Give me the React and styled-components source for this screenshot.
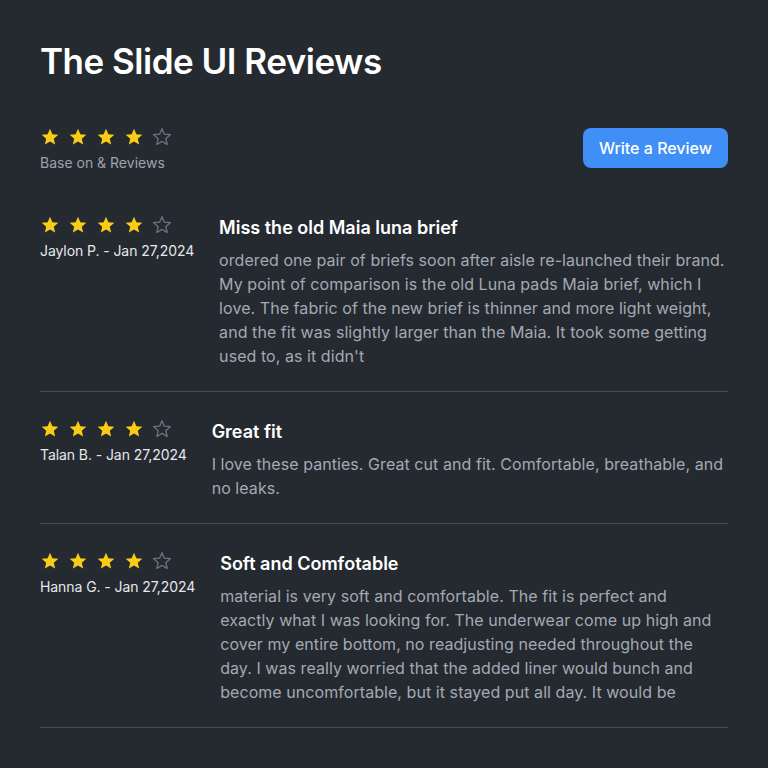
import styled, { createGlobalStyle } from "styled-components";

const GlobalStyle = createGlobalStyle`
  * {
    box-sizing: border-box;
  }
  body {
    margin: 0;
    background: #252a31;
    font-family: Inter, "Noto Sans", sans-serif;
  }
`;

const Page = styled.div`
  min-height: 768px;
  padding: 41px 40px 40px;
  background: #252a31;
`;

const Title = styled.h1`
  margin: 0 0 44px;
  font-size: 35px;
  line-height: 40px;
  font-weight: 600;
  color: #ffffff;
  letter-spacing: -0.5px;
`;

const Header = styled.div`
  display: flex;
  justify-content: space-between;
  align-items: flex-start;
  margin-bottom: 15px;
`;

const Summary = styled.div`
  display: flex;
  flex-direction: column;
  gap: 6px;
  padding-top: 2px;
`;

const SummaryText = styled.span`
  font-size: 14px;
  line-height: 20px;
  color: #9ca3af;
`;

const Button = styled.button`
  height: 40px;
  margin-top: 3px;
  padding: 0 16px;
  border: none;
  border-radius: 8px;
  background: #3f8ff7;
  color: #ffffff;
  font-family: inherit;
  font-size: 16px;
  font-weight: 500;
  cursor: pointer;
`;

const StarRow = styled.div`
  display: flex;
  gap: 8px;
`;

const Review = styled.div`
  display: flex;
  align-items: flex-start;
  gap: 25px;
  padding: 26px 0 23px;
  border-bottom: 1px solid #464c55;
`;

const Meta = styled.div`
  display: flex;
  flex-direction: column;
  gap: 6px;
  flex-shrink: 0;
  padding-top: 1px;
`;

const Author = styled.span`
  font-size: 14px;
  line-height: 20px;
  color: #e5e7eb;
  letter-spacing: -0.08px;
`;

const Body = styled.div`
  flex: 1;
  padding-right: 3px;
`;

const ReviewTitle = styled.h3`
  margin: 0 0 6px;
  font-size: 18px;
  line-height: 28px;
  font-weight: 600;
  color: #ffffff;
`;

const ReviewText = styled.p`
  margin: 0;
  font-size: 16px;
  line-height: 24px;
  color: #a3a9b2;
  letter-spacing: 0.06px;
`;

const STAR = "M12 17.27L18.18 21l-1.64-7.03L22 9.24l-7.19-.61L12 2 9.19 8.63 2 9.24l5.46 4.73L5.82 21z";

const Star = ({ filled }) => (
  <svg width="20" height="20" viewBox="0 0 24 24">
    {filled ? (
      <path d={STAR} fill="#facc15" />
    ) : (
      <path d={STAR} fill="none" stroke="#6b7280" strokeWidth="1.6" strokeLinejoin="round" />
    )}
  </svg>
);

const Stars = ({ value }) => (
  <StarRow>
    {[1, 2, 3, 4, 5].map((i) => (
      <Star key={i} filled={i <= value} />
    ))}
  </StarRow>
);

const reviews = [
  {
    author: "Jaylon P. - Jan 27,2024",
    title: "Miss the old Maia luna brief",
    text: "ordered one pair of briefs soon after aisle re-launched their brand. My point of comparison is the old Luna pads Maia brief, which I love. The fabric of the new brief is thinner and more light weight, and the fit was slightly larger than the Maia. It took some getting used to, as it didn't",
  },
  {
    author: "Talan B. - Jan 27,2024",
    title: "Great fit",
    text: "I love these panties. Great cut and fit. Comfortable, breathable, and no leaks.",
  },
  {
    author: "Hanna G. - Jan 27,2024",
    title: "Soft and Comfotable",
    text: "material is very soft and comfortable. The fit is perfect and exactly what I was looking for. The underwear come up high and cover my entire bottom, no readjusting needed throughout the day. I was really worried that the added liner would bunch and become uncomfortable, but it stayed put all day. It would be",
  },
];

const App = () => {
  return (
    <Page>
      <GlobalStyle />
      <Title>The Slide UI Reviews</Title>
      <Header>
        <Summary>
          <Stars value={4} />
          <SummaryText>Base on &amp; Reviews</SummaryText>
        </Summary>
        <Button>Write a Review</Button>
      </Header>
      {reviews.map((r) => (
        <Review key={r.author}>
          <Meta>
            <Stars value={4} />
            <Author>{r.author}</Author>
          </Meta>
          <Body>
            <ReviewTitle>{r.title}</ReviewTitle>
            <ReviewText>{r.text}</ReviewText>
          </Body>
        </Review>
      ))}
    </Page>
  );
};

export default App;
